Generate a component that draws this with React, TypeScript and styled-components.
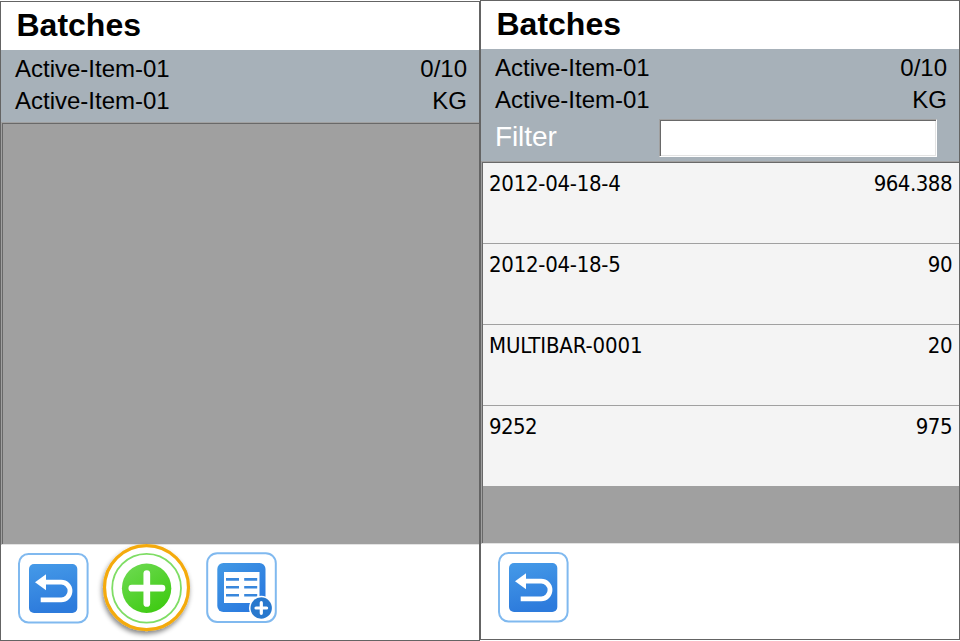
import React from "react";
import styled, { createGlobalStyle } from "styled-components";

const GlobalStyle = createGlobalStyle`
  * { box-sizing: border-box; }
  body { margin: 0; background: #fff; overflow: hidden; }
`;

const Screens = styled.main`
  display: flex;
  width: 960px;
  height: 641px;
  color: #000;
  font-family: "Liberation Sans", Arial, sans-serif;
`;

const Panel = styled.section<{ $lowered?: boolean }>`
  display: flex;
  flex-direction: column;
  width: 480px;
  height: 640px;
  margin-top: ${(p) => (p.$lowered ? 1 : 0)}px;
  border: 1px solid #646464;
  background: #fff;
`;

const Title = styled.h1`
  margin: 0;
  height: 48px;
  padding-left: 15.5px;
  font-size: 32px;
  line-height: 46px;
`;

const Info = styled.header<{ $height: number }>`
  height: ${(p) => p.$height}px;
  background: #a7b1b9;
  padding: 3px 12px 0 14px;
`;

const InfoRow = styled.div`
  display: flex;
  justify-content: space-between;
  height: 32px;
  font-size: 24px;
  line-height: 32px;
`;

const FilterRow = styled.label`
  display: flex;
  justify-content: space-between;
  padding-right: 9px;
  color: #fff;
  font-size: 28px;
  line-height: 42px;
  letter-spacing: -0.1px;
`;

const FilterInput = styled.input`
  width: 278px;
  height: 38px;
  margin: 3px 1px 0 0;
  padding: 0 6px;
  border: 1px solid;
  border-color: #a0a0a0 #fff #fff #a0a0a0;
  border-radius: 0;
  outline: 0;
  background: #fff;
  box-shadow: inset 1px 1px #696969, inset -1px -1px #e3e3e3;
  font-size: 24px;
`;

const List = styled.div`
  height: 423px;
  flex: 1;
  border-top: 1px solid #a0a0a0;
  border-left: 1px solid #a0a0a0;
  border-bottom: 1px solid #e3e3e3;
  background: #a0a0a0;
`;

const ListInner = styled.div`
  height: 100%;
  border-top: 1px solid #696969;
  border-left: 1px solid #696969;
`;

const BatchRow = styled.div`
  display: flex;
  justify-content: space-between;
  height: 81px;
  padding: 6px 7px 0 6px;
  border-bottom: 1px solid #a0a0a0;
  background: #f4f4f4;
  font-family: "DejaVu Sans Condensed", "DejaVu Sans", sans-serif;
  font-stretch: condensed;
  font-size: 22px;
  line-height: 30px;
`;

const BatchText = styled.span<{ $spacing: number }>`
  letter-spacing: ${(p) => p.$spacing}px;
`;

const Toolbar = styled.footer`
  display: flex;
  gap: 8px;
  height: 95px;
  padding-left: 17px;
`;

const ToolButton = styled.button`
  width: 70px;
  height: 71px;
  margin-top: 8px;
  padding: 0;
  border: 0;
  background: none;
  svg { display: block; overflow: visible; }
`;

const AddButton = styled(ToolButton)`
  position: relative;
  width: 102px;
  height: 102px;
  margin-top: -8px;
`;

const TableButton = styled(ToolButton)`
  margin-top: 7px;
`;

function BackIcon({ id }: { id: string }) {
  return (
    <svg width="71" height="71" viewBox="0 0 71 71">
      <defs>
        <linearGradient id={id} x2="0.2" y2="1">
          <stop stopColor="#459ae8" />
          <stop offset="1" stopColor="#2d7bdc" />
        </linearGradient>
      </defs>
      <rect x="1" y="1" width="68.6" height="68.6" rx="9.5" fill="#fff" stroke="#80b9ef" strokeWidth="2" />
      <rect x="11" y="11" width="48.3" height="49" rx="5" fill={`url(#${id})`} />
      <path d="M27 29.2H43.2a8.8 8.8 0 0 1 0 17.6H22.7" fill="none" stroke="#fff" strokeWidth="4.8" />
      <path d="M17 29.3 28 21.3V37.3Z" fill="#fff" />
    </svg>
  );
}

function AddIcon() {
  return (
    <svg width="102" height="102" viewBox="0 0 102 102">
      <defs>
        <linearGradient id="green" x2="0.65" y2="1">
          <stop stopColor="#70db55" />
          <stop offset="1" stopColor="#40cb14" />
        </linearGradient>
        <filter id="shadow" x="-20%" y="-20%" width="140%" height="140%">
          <feDropShadow dx="-1" dy="3" stdDeviation="2.4" floodOpacity=".48" />
        </filter>
      </defs>
      <circle cx="50.5" cy="50.6" r="42" fill="#fff" stroke="#f4aa09" strokeWidth="3.2" filter="url(#shadow)" />
      <circle cx="50.6" cy="51.2" r="34.4" fill="none" stroke="#7fdd65" strokeWidth="1.8" />
      <circle cx="50.6" cy="51.2" r="24.7" fill="url(#green)" />
      <path d="M50.8 36.6V66.4M35.8 51.2H66" stroke="#fff" strokeWidth="6.7" strokeLinecap="round" />
    </svg>
  );
}

function TableIcon() {
  return (
    <svg width="71" height="72" viewBox="0 0 71 72">
      <defs>
        <linearGradient id="table-blue" x2="0.8" y2="1">
          <stop stopColor="#4299e5" />
          <stop offset="1" stopColor="#2877de" />
        </linearGradient>
      </defs>
      <rect x="1.2" y="1.2" width="68.6" height="68.8" rx="10" fill="#fff" stroke="#80b9ef" strokeWidth="2" />
      <rect x="11.3" y="11" width="48.2" height="49" rx="6" fill="url(#table-blue)" />
      <path d="M18 20H53.5V51H18Z" fill="#fff" />
      <path d="M20 27.4H33M38.2 27.4H51.2M20 35.3H33M38.2 35.3H51.2M20 43.3H33M38.2 43.3H51.2" stroke="#3987dc" strokeWidth="2.6" />
      <circle cx="55.2" cy="56" r="12.2" fill="#fff" />
      <circle cx="55.2" cy="56" r="10.7" fill="#2878cd" />
      <path d="M55.3 50.7V61.3M50 56H60.6" stroke="#fff" strokeWidth="3.2" strokeLinecap="round" />
    </svg>
  );
}

function ItemInfo() {
  return (
    <>
      <InfoRow><span>Active-Item-01</span><span>0/10</span></InfoRow>
      <InfoRow><span>Active-Item-01</span><span>KG</span></InfoRow>
    </>
  );
}

const batches = [
  { name: "2012-04-18-4", amount: "964.388", spacing: -0.27 },
  { name: "2012-04-18-5", amount: "90", spacing: -0.27 },
  { name: "MULTIBAR-0001", amount: "20", spacing: -0.12 },
  { name: "9252", amount: "975", spacing: -0.6 },
];

export default function App() {
  return (
    <>
      <GlobalStyle />
      <Screens>
        <Panel $lowered>
          <Title>Batches</Title>
          <Info $height={72}><ItemInfo /></Info>
          <List><ListInner /></List>
          <Toolbar>
            <ToolButton aria-label="Back"><BackIcon id="back-left" /></ToolButton>
            <AddButton aria-label="Add batch"><AddIcon /></AddButton>
            <TableButton aria-label="Batch list"><TableIcon /></TableButton>
          </Toolbar>
        </Panel>
        <Panel>
          <Title>Batches</Title>
          <Info $height={112}>
            <ItemInfo />
            <FilterRow>
              <span>Filter</span>
              <FilterInput aria-label="Filter" />
            </FilterRow>
          </Info>
          <List>
            <ListInner>
              {batches.map((batch) => (
                <BatchRow key={batch.name}>
                  <BatchText $spacing={batch.spacing}>{batch.name}</BatchText>
                  <BatchText $spacing={-0.5}>{batch.amount}</BatchText>
                </BatchRow>
              ))}
            </ListInner>
          </List>
          <Toolbar>
            <ToolButton aria-label="Back"><BackIcon id="back-right" /></ToolButton>
          </Toolbar>
        </Panel>
      </Screens>
    </>
  );
}
